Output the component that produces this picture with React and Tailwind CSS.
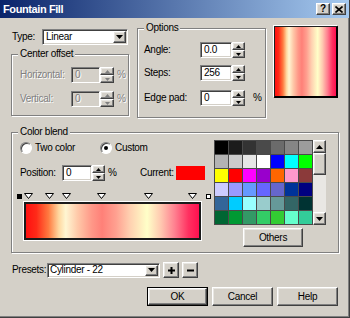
import React from "react";

const raised =
  "bg-[#d4d0c8] border border-t-white border-l-white border-r-[#404040] border-b-[#404040] shadow-[inset_-1px_-1px_0_#808080,inset_1px_1px_0_#e8e6e2]";
const sunken =
  "border border-t-[#808080] border-l-[#808080] border-r-white border-b-white shadow-[inset_1px_1px_0_#404040,inset_-1px_-1px_0_#d4d0c8]";
const etched = "relative border border-[#808080] shadow-[inset_1px_1px_0_#fff,1px_1px_0_#fff]";

const blend =
  "bg-[linear-gradient(to_right,#ff1010_0%,#ff2a18_6%,#ff7a40_13%,#ffd8a0_19%,#fff6d2_23%,#ffc8a8_30%,#ff9888_38%,#ff8078_44%,#ffa090_52%,#ffd0b0_60%,#ffffc8_70%,#ffc8b0_78%,#ff8090_86%,#ff3060_94%,#ff1050_100%)]";

const palette = [
  "bg-[#000000]", "bg-[#1c1c1c]", "bg-[#333333]", "bg-[#4a4a4a]", "bg-[#6b6b6b]", "bg-[#858585]", "bg-[#9c9c9c]",
  "bg-[#b3b3b3]", "bg-[#cccccc]", "bg-[#e6e6e6]", "bg-[#ffffff]", "bg-[#0000ff]", "bg-[#00ffff]", "bg-[#00ff00]",
  "bg-[#ffff00]", "bg-[#ff0000]", "bg-[#ff00ff]", "bg-[#9900cc]", "bg-[#ff6600]", "bg-[#ff99cc]", "bg-[#8b3a3a]",
  "bg-[#ccccff]", "bg-[#9999ff]", "bg-[#6699ff]", "bg-[#6666ff]", "bg-[#6666cc]", "bg-[#003399]", "bg-[#000080]",
  "bg-[#336699]", "bg-[#00ccff]", "bg-[#99ffff]", "bg-[#99cccc]", "bg-[#669999]", "bg-[#336666]", "bg-[#003333]",
  "bg-[#006633]", "bg-[#009933]", "bg-[#339966]", "bg-[#33cc66]", "bg-[#33cc33]", "bg-[#66ffcc]", "bg-[#33cc99]",
];

const markers = ["left-[12px]", "left-[33px]", "left-[50px]", "left-[85px]", "left-[132px]", "left-[176px]"];

function Tri({ up, color = "#000", w = 5, h = 3 }) {
  return (
    <svg width={w} height={h} viewBox={`0 0 ${w} ${h}`}>
      <path d={up ? `M${w / 2} 0L${w} ${h}H0z` : `M0 0H${w}L${w / 2} ${h}z`} fill={color} />
    </svg>
  );
}

function Spin({ w = "w-[13px]", disabled }) {
  const c = disabled ? "#808080" : "#000";
  return (
    <div className={`flex flex-col h-[16px] ${w}`}>
      <div className={`${raised} h-[8px] flex items-center justify-center`}>
        <Tri up color={c} />
      </div>
      <div className={`${raised} h-[8px] flex items-center justify-center`}>
        <Tri color={c} />
      </div>
    </div>
  );
}

function Field({ value, w, disabled }) {
  return (
    <div className={`${sunken} ${w} h-[16px] pl-[3px] flex items-center ${disabled ? "bg-[#d4d0c8] text-[#808080]" : "bg-white"}`}>
      {value}
    </div>
  );
}

function Radio({ checked }) {
  return (
    <span className="w-[12px] h-[12px] rounded-full bg-white border border-t-[#808080] border-l-[#808080] border-r-white border-b-white shadow-[inset_1px_1px_0_#404040] flex items-center justify-center">
      {checked && <span className="w-[4px] h-[4px] rounded-full bg-black" />}
    </span>
  );
}

function Legend({ children }) {
  return <span className="absolute -top-[7px] left-[6px] px-[2px] bg-[#d4d0c8]">{children}</span>;
}

export default function App() {
  return (
    <div className="w-[350px] h-[318px] bg-[#d4d0c8] flex flex-col overflow-hidden border-r border-b border-[#404040] shadow-[inset_-1px_-1px_0_#808080] font-['Liberation_Sans',Arial,sans-serif] text-[10px] leading-[12px] tracking-[-0.3px] text-black">
      {/* title bar */}
      <div className="h-[18px] shrink-0 flex items-center pl-[3px] pr-[3px] bg-[linear-gradient(to_right,#0a246a,#a6caf0)]">
        <span className="text-white font-bold text-[11px] tracking-[-0.4px]">Fountain Fill</span>
        <div className="ml-auto flex gap-[2px]">
          <div className={`${raised} w-[14px] h-[12px] flex items-center justify-center font-bold text-[10px] leading-none`}>?</div>
          <div className={`${raised} w-[14px] h-[12px] flex items-center justify-center`}>
            <svg width="8" height="7" viewBox="0 0 8 7">
              <path d="M0.5 0.5L7.5 6.5M7.5 0.5L0.5 6.5" stroke="#000" strokeWidth="1.6" />
            </svg>
          </div>
        </div>
      </div>

      {/* top section */}
      <div className="flex items-start h-[100px] pl-[11px] shrink-0">
        <div className="flex flex-col w-[118px]">
          <div className="flex items-center mt-[11px] h-[16px]">
            <span className="ml-[1px] w-[30px]">Type:</span>
            <div className={`${sunken} bg-white w-[86px] h-[16px] flex items-center pl-[3px]`}>
              Linear
              <div className={`${raised} ml-auto mr-[1px] w-[13px] h-[12px] flex items-center justify-center`}>
                <Tri w={7} h={4} />
              </div>
            </div>
          </div>
          <div className={`${etched} mt-[9px] h-[62px] pl-[8px]`}>
            <Legend>Center offset</Legend>
            <div className="flex items-center mt-[12px] h-[16px] text-[#808080] [text-shadow:1px_1px_0_#fff]">
              <span className="w-[51px]">Horizontal:</span>
              <Field value="0" w="w-[29px]" disabled />
              <Spin w="w-[14px]" disabled />
              <span className="ml-[3px]">%</span>
            </div>
            <div className="flex items-center mt-[8px] h-[16px] text-[#808080] [text-shadow:1px_1px_0_#fff]">
              <span className="w-[51px]">Vertical:</span>
              <Field value="0" w="w-[29px]" disabled />
              <Spin w="w-[14px]" disabled />
              <span className="ml-[3px]">%</span>
            </div>
          </div>
        </div>

        <div className={`${etched} ml-[8px] mt-[10px] w-[129px] h-[90px] pl-[6px]`}>
          <Legend>Options</Legend>
          <div className="flex items-center mt-[13px] h-[16px]">
            <span className="w-[56px]">Angle:</span>
            <Field value="0.0" w="w-[32px]" />
            <Spin />
          </div>
          <div className="flex items-center mt-[7px] h-[16px]">
            <span className="w-[56px]">Steps:</span>
            <Field value="256" w="w-[32px]" />
            <Spin />
          </div>
          <div className="flex items-center mt-[9px] h-[16px]">
            <span className="w-[56px]">Edge pad:</span>
            <Field value="0" w="w-[32px]" />
            <Spin />
            <span className="ml-[8px]">%</span>
          </div>
        </div>

        <div className="ml-[8px] mt-[8px] w-[64px] h-[72px] border border-[#202020] border-r-2 border-b-2 border-r-black border-b-black shadow-[-1px_-1px_0_#fff]">
          <div className={`w-full h-full ${blend}`} />
        </div>
      </div>

      {/* color blend */}
      <div className={`${etched} mt-[14px] ml-[11px] w-[328px] h-[121px] shrink-0 flex`}>
        <Legend>Color blend</Legend>
        <div className="w-[202px] flex flex-col">
          <div className="flex items-center mt-[8px] h-[14px] pl-[8px]">
            <div className="flex items-center w-[80px]">
              <Radio />
              <span className="ml-[3px]">Two color</span>
            </div>
            <Radio checked />
            <span className="ml-[3px]">Custom</span>
          </div>
          <div className="flex items-center mt-[10px] h-[16px] pl-[8px]">
            <span className="w-[42px]">Position:</span>
            <Field value="0" w="w-[30px]" />
            <Spin />
            <span className="ml-[3px] w-[32px]">%</span>
            <span className="w-[36px]">Current:</span>
            <div className="w-[29px] h-[14px] bg-[#ff0000]" />
          </div>
          <div className="relative mt-[12px] h-[7px]">
            <span className="absolute left-[5px] top-[1px] w-[5px] h-[5px] bg-black" />
            {markers.map((m) => (
              <svg key={m} className={`absolute top-0 ${m}`} width="9" height="6" viewBox="0 0 9 6">
                <path d="M0.5 0.5H8.5L4.5 5.5z" fill="#fff" stroke="#000" strokeWidth="1" />
              </svg>
            ))}
            <span className="absolute left-[194px] top-[1px] w-[5px] h-[5px] bg-white border border-black" />
          </div>
          <div className="mt-[2px] ml-[12px] w-[177px] h-[38px] border-2 border-[#1a1a1a] shadow-[0_0_0_1px_#fff]">
            <div className={`w-full h-full ${blend}`} />
          </div>
        </div>

        <div className="flex flex-col mt-[7px]">
          <div className="flex">
            <div className="grid grid-cols-[repeat(7,13px)] grid-rows-[repeat(6,13px)] gap-px p-px bg-[#4a4a4a] w-[99px] h-[85px]">
              {palette.map((c, i) => (
                <div key={i} className={c} />
              ))}
            </div>
            <div className="flex flex-col w-[13px] h-[85px]">
              <div className={`${raised} h-[13px] flex items-center justify-center`}>
                <Tri up w={7} h={4} />
              </div>
              <div className={`${raised} h-[22px]`} />
              <div className="flex-1 bg-[#e9e7e3]" />
              <div className={`${raised} h-[13px] flex items-center justify-center`}>
                <Tri w={7} h={4} />
              </div>
            </div>
          </div>
          <div className={`${raised} ml-[29px] mt-[3px] w-[60px] h-[19px] flex items-center justify-center`}>Others</div>
        </div>
      </div>

      {/* presets */}
      <div className="flex items-center mt-[9px] h-[16px] pl-[12px] shrink-0">
        <span className="w-[35px]">Presets:</span>
        <div className={`${sunken} bg-white w-[113px] h-[15px] flex items-center pl-[2px]`}>
          Cylinder - 22
          <div className={`${raised} ml-auto mr-[1px] w-[13px] h-[11px] flex items-center justify-center`}>
            <Tri w={7} h={4} />
          </div>
        </div>
        <div className={`${raised} ml-[3px] w-[16px] h-[16px] flex items-center justify-center`}>
          <svg width="7" height="7" viewBox="0 0 7 7">
            <path d="M0 2.5H7V4.5H0zM2.5 0H4.5V7H2.5z" fill="#000" />
          </svg>
        </div>
        <div className={`${raised} ml-[3px] w-[16px] h-[16px] flex items-center justify-center`}>
          <svg width="7" height="7" viewBox="0 0 7 7">
            <path d="M0 2.5H7V4.5H0z" fill="#000" />
          </svg>
        </div>
      </div>

      {/* buttons */}
      <div className="flex gap-[4px] mt-[9px] pl-[147px] shrink-0">
        <div className="w-[61px] h-[19px] border border-black flex">
          <div className={`${raised} flex-1 flex items-center justify-center`}>OK</div>
        </div>
        <div className={`${raised} w-[61px] h-[19px] flex items-center justify-center`}>Cancel</div>
        <div className={`${raised} w-[61px] h-[19px] flex items-center justify-center`}>Help</div>
      </div>
    </div>
  );
}
